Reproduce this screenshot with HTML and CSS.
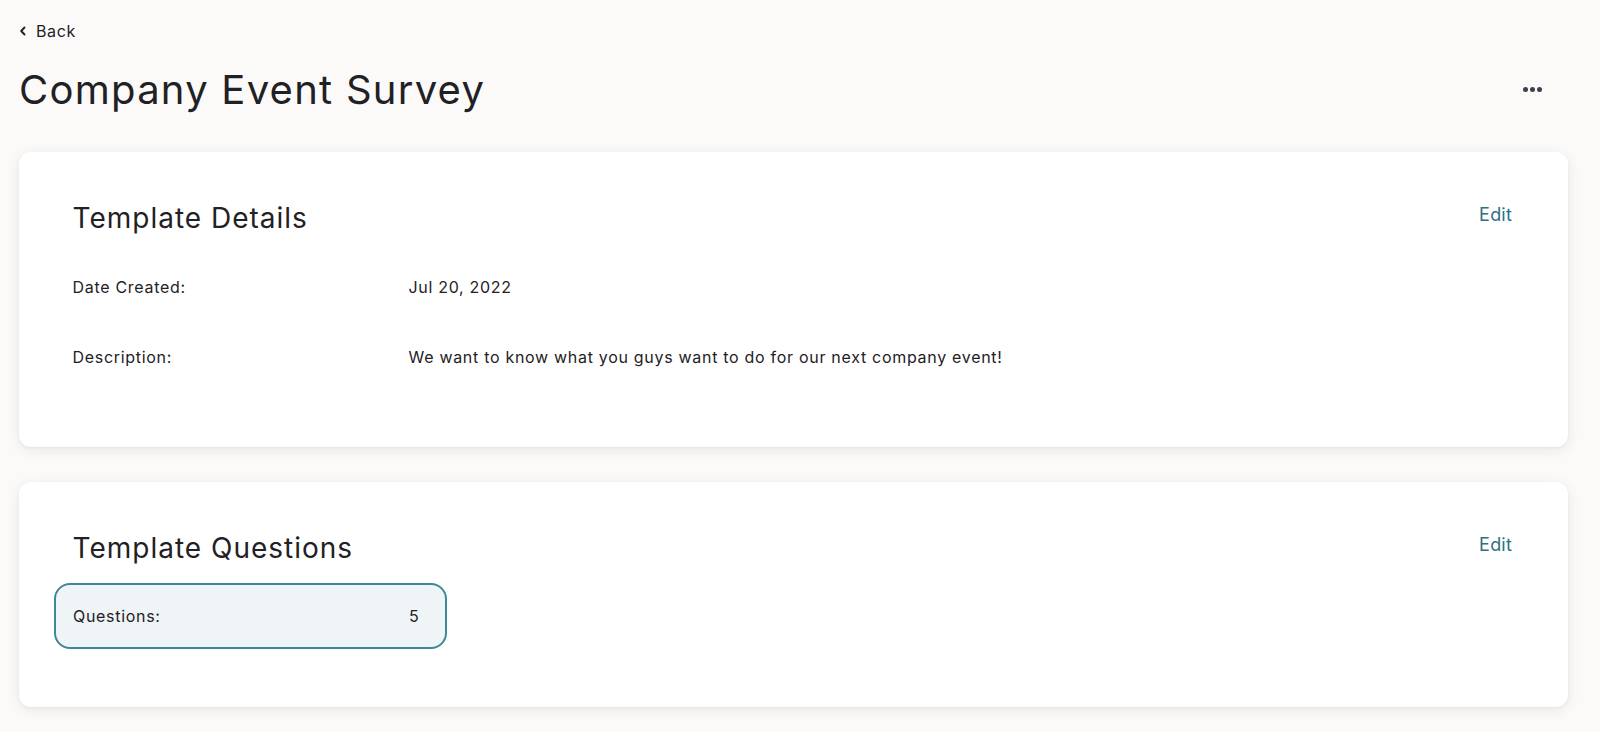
FILE: index.html
```html
<!DOCTYPE html>
<html lang="en">
<head>
<meta charset="utf-8">
<title>Company Event Survey</title>
<link rel="stylesheet" href="styles.css">
</head>
<body>
<div class="page">
  <a class="back" href="#">
    <svg class="chev" width="8" height="10" viewBox="0 0 8 10" aria-hidden="true"><path d="M5.5 1.5 L2.2 5 L5.5 8.5" fill="none" stroke="#1f2125" stroke-width="1.9" stroke-linecap="round" stroke-linejoin="round"/></svg>
    <span>Back</span>
  </a>
  <div class="title-row">
    <h1 class="title">Company Event Survey</h1>
    <button class="more" aria-label="More options"><span></span><span></span><span></span></button>
  </div>

  <section class="card card-details">
    <div class="card-head">
      <h2 class="card-title">Template Details</h2>
      <a class="edit" href="#">Edit</a>
    </div>
    <div class="rows">
      <div class="row"><div class="label">Date Created:</div><div class="value">Jul 20, 2022</div></div>
      <div class="row"><div class="label">Description:</div><div class="value">We want to know what you guys want to do for our next company event!</div></div>
    </div>
  </section>

  <section class="card card-questions">
    <div class="card-head">
      <h2 class="card-title">Template Questions</h2>
      <a class="edit" href="#">Edit</a>
    </div>
    <div class="qbox"><div class="label">Questions:</div><div class="value">5</div></div>
  </section>
</div>
</body>
</html>
```
FILE: styles.css
```css
* { box-sizing: border-box; }
html, body { margin: 0; padding: 0; }
body {
  background: #fbfaf9;
  color: #1f2125;
  font-family: Inter, "Noto Sans", Roboto, sans-serif;
  height: 732px;
  overflow: hidden;
}
.page {
  padding: 21px 32px 0 19px;
}
.back {
  display: flex;
  align-items: center;
  gap: 9px;
  height: 20px;
  color: #1f2125;
  text-decoration: none;
  font-size: 16px;
  line-height: 20px;
  letter-spacing: 0.6px;
  width: max-content;
}
.chev { display: block; }
.title-row {
  display: flex;
  align-items: center;
  justify-content: space-between;
  margin-top: 24.5px;
}
.title {
  margin: 0;
  font-size: 40px;
  line-height: 48px;
  font-weight: 400;
  letter-spacing: 1.25px;
}
.more {
  display: flex;
  gap: 2px;
  padding: 0;
  margin-right: 26px;
  border: 0;
  background: transparent;
  cursor: pointer;
}
.more span {
  width: 5px;
  height: 5px;
  border-radius: 50%;
  background: #3b3f4e;
}
.card {
  background: #fff;
  border-radius: 12px;
  box-shadow: 0 3px 14px rgba(40, 30, 20, 0.08), 0 1px 3px rgba(40, 30, 20, 0.05);
  padding: 49px 56px 0 34.5px;
}
.card-details { margin-top: 38.5px; height: 295px; }
.card-questions { margin-top: 35px; height: 225px; }
.card-head {
  display: flex;
  justify-content: space-between;
  align-items: flex-start;
  padding-left: 19px;
}
.card-title {
  margin: 0;
  font-size: 28px;
  line-height: 34px;
  font-weight: 400;
  letter-spacing: 1px;
}
.edit {
  margin-top: 2.5px;
  font-size: 18px;
  line-height: 22px;
  letter-spacing: 0.2px;
  color: #2f7083;
  text-decoration: none;
}
.rows { margin-top: 41.7px; }
.row {
  display: grid;
  grid-template-columns: 336px auto;
  padding-left: 19px;
  font-size: 16px;
  line-height: 20px;
  letter-spacing: 0.7px;
}
.row + .row { margin-top: 50px; }
.qbox {
  display: inline-grid;
  grid-template-columns: 336px auto;
  align-items: center;
  margin-top: 18px;
  height: 66px;
  padding: 0 26px 0 17.5px;
  border: 2px solid #3f8896;
  border-radius: 16px;
  background: #eff4f7;
  font-size: 16px;
  line-height: 20px;
  letter-spacing: 0.7px;
}
```
